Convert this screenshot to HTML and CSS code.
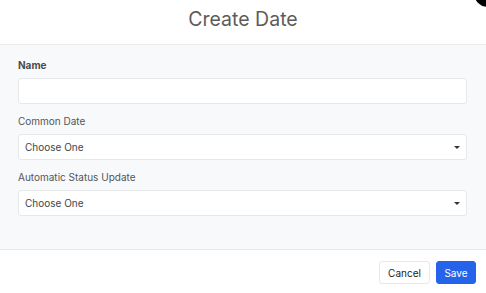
FILE: index.html
```html
<!DOCTYPE html>
<html>
<head>
<meta charset="utf-8">
<link rel="stylesheet" href="styles.css">
</head>
<body>
<div class="modal">
  <div class="modal-header">
    <h1 class="modal-title">Create Date</h1>
    <button class="close-btn" aria-label="Close"></button>
  </div>
  <div class="modal-body">
    <div class="field">
      <label class="label label-bold">Name</label>
      <div class="control"></div>
    </div>
    <div class="field">
      <label class="label">Common Date</label>
      <div class="control select"><span>Choose One</span><span class="caret"></span></div>
    </div>
    <div class="field">
      <label class="label">Automatic Status Update</label>
      <div class="control select"><span>Choose One</span><span class="caret"></span></div>
    </div>
  </div>
  <div class="modal-footer">
    <button class="btn btn-cancel">Cancel</button>
    <button class="btn btn-save">Save</button>
  </div>
</div>
</body>
</html>
```
FILE: styles.css
```css
* { box-sizing: border-box; }
html, body { margin: 0; padding: 0; background: #fff; }
body {
  font-family: Inter, "Noto Sans", sans-serif;
  width: 486px;
  height: 293px;
  overflow: hidden;
}
.modal { position: relative; }
.modal-header {
  height: 45px;
  border-bottom: 1px solid #e8e9ec;
  display: flex;
  justify-content: center;
  padding-top: 7px;
}
.modal-title {
  margin: 0;
  font-size: 19.5px;
  line-height: 24px;
  font-weight: 400;
  color: #5c5c5c;
}
.close-btn {
  position: absolute;
  left: 474px;
  top: -21px;
  width: 28px;
  height: 28px;
  border-radius: 50%;
  background: #000;
  border: none;
  padding: 0;
}
.modal-body {
  background: #f8f9fb;
  height: 204px;
  padding: 13px 19px 0 18px;
  display: flex;
  flex-direction: column;
  gap: 10px;
}
.field { display: flex; flex-direction: column; }
.label {
  font-size: 10px;
  line-height: 14px;
  color: #555;
  margin-bottom: 6px;
}
.label-bold { font-weight: 700; color: #4a4a4a; }
.control {
  height: 26px;
  background: #fff;
  border: 1px solid #e6e8eb;
  border-radius: 3px;
}
.select {
  display: flex;
  align-items: center;
  justify-content: space-between;
  padding: 0 6px 0 6px;
  font-size: 10px;
  color: #444;
}
.caret {
  width: 0;
  height: 0;
  border-left: 3px solid transparent;
  border-right: 3px solid transparent;
  border-top: 3.5px solid #333;
  margin-right: 0;
}
.modal-footer {
  border-top: 1px solid #e8e9ec;
  display: flex;
  justify-content: flex-end;
  gap: 6px;
  padding: 11px 10px 0 0;
}
.btn {
  height: 23px;
  border-radius: 3px;
  font-family: Inter, "Noto Sans", sans-serif;
  font-size: 10px;
  padding: 0;
  cursor: pointer;
}
.btn-cancel {
  width: 51px;
  background: #fff;
  border: 1px solid #e6e8eb;
  color: #222;
}
.btn-save {
  width: 40px;
  background: #2563eb;
  border: 1px solid #2563eb;
  color: #fff;
}
```
